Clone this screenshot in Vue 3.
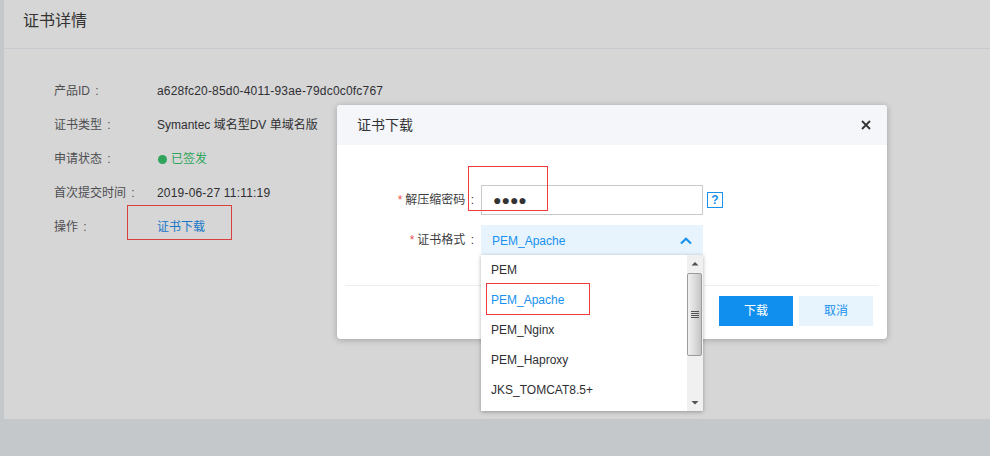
<script setup>
const rows = [
  { label: '产品ID :', value: 'a628fc20-85d0-4011-93ae-79dc0c0fc767', kind: 'wide' },
  { label: '证书类型 :', value: 'Symantec 域名型DV 单域名版' },
  { label: '申请状态 :', value: '已签发', kind: 'status' },
  { label: '首次提交时间 :', value: '2019-06-27 11:11:19', kind: 'wide' },
  { label: '操作 :', value: '证书下载', kind: 'link' },
]
const options = ['PEM', 'PEM_Apache', 'PEM_Nginx', 'PEM_Haproxy', 'JKS_TOMCAT8.5+']
</script>

<template>
  <div class="page">
    <main class="panel">
      <h1 class="title">证书详情</h1>
      <dl class="info">
        <div v-for="r in rows" :key="r.label" class="row">
          <dt>{{ r.label }}</dt>
          <dd :class="r.kind">
            <i v-if="r.kind === 'status'" class="dot"></i>{{ r.value }}
            <span v-if="r.kind === 'link'" class="mark mark-link"></span>
          </dd>
        </div>
      </dl>
    </main>

    <section class="modal">
      <header class="modal-head">
        <span>证书下载</span>
        <svg class="close" width="10" height="10" viewBox="0 0 10 10"><path d="M1 1l8 8M9 1l-8 8" stroke="#333" stroke-width="1.800" fill="none"/></svg>
      </header>
      <div class="modal-body">
        <div class="field">
          <label><b>*</b>解压缩密码 :</label>
          <div class="input">●●●●</div>
          <span class="help">?</span>
        </div>
        <div class="field field-select">
          <label><b>*</b>证书格式 :</label>
          <div class="select">
            <span>PEM_Apache</span>
            <svg width="12" height="8" viewBox="0 0 12 8"><path d="M1 6.500L6 1.800l5 4.700" stroke="#1890ee" stroke-width="2.200" fill="none"/></svg>
          </div>
        </div>
      </div>
      <footer class="modal-foot">
        <button class="btn primary">下载</button>
        <button class="btn plain">取消</button>
      </footer>
    </section>

    <div class="dropdown">
      <ul>
        <li v-for="o in options" :key="o" :class="{ active: o === 'PEM_Apache' }">{{ o }}</li>
      </ul>
      <div class="scrollbar">
        <svg class="arrow" width="16" height="17" viewBox="0 0 16 17"><path d="M4.500 10.500h7L8 7z" fill="#505050"/></svg>
        <div class="thumb"><i></i><i></i><i></i><i></i></div>
        <svg class="arrow down" width="16" height="17" viewBox="0 0 16 17"><path d="M4.500 7h7L8 10.500z" fill="#505050"/></svg>
      </div>
    </div>

    <span class="mark mark-pass"></span>
    <span class="mark mark-option"></span>
  </div>
</template>

<style scoped>
.page {
  position: relative;
  width: 990px;
  height: 456px;
  padding-left: 4px;
  box-sizing: border-box;
  overflow: hidden;
  background: #c4c8cb;
  font: 12px/1 "Liberation Sans", "Noto Sans CJK SC", sans-serif;
  color: #2f2f33;
}
.panel {
  height: 419px;
  background: #d6d6d6;
}
.title {
  margin: 0;
  height: 49px;
  box-sizing: border-box;
  padding: 12px 0 0 19px;
  border-bottom: 1px solid #c9cad0;
  font-size: 16px;
  line-height: 18px;
  font-weight: 400;
  color: #333;
}
.info {
  margin: 0;
  padding: 25px 0 0 50px;
}
.row {
  display: flex;
  height: 34px;
  line-height: 34px;
}
dt {
  width: 103px;
  color: #4e4e52;
  word-spacing: 2px;
}
dd {
  position: relative;
  margin: 0;
  display: flex;
  align-items: center;
}
.wide { letter-spacing: 0.19px; }
.status { color: #2ea55a; }
.link { color: #1877c9; }
.dot {
  width: 9px;
  height: 9px;
  margin: 0 4px 0 1px;
  border-radius: 50%;
  background: #2ea55a;
}
.mark {
  position: absolute;
  box-sizing: border-box;
  border: 1px solid #ee3c3c;
  pointer-events: none;
}
.mark-link {
  left: -30px;
  top: -5px;
  width: 105px;
  height: 35px;
  border-color: #d84040;
}
.mark-pass {
  left: 468px;
  top: 166px;
  width: 80px;
  height: 45px;
}
.mark-option {
  left: 486px;
  top: 283px;
  width: 104px;
  height: 32px;
}
.modal {
  position: absolute;
  left: 337px;
  top: 105px;
  width: 550px;
  height: 234px;
  display: flex;
  flex-direction: column;
  border-radius: 4px;
  background: #fff;
  box-shadow: 0 1px 6px rgba(0, 0, 0, .25);
  overflow: hidden;
}
.modal-head {
  height: 40px;
  flex: none;
  display: flex;
  align-items: center;
  justify-content: space-between;
  padding: 0 16px 0 20px;
  background: #f4f6fa;
  font-size: 14px;
  color: #333;
}
.modal-body {
  flex: 1;
  padding-top: 40px;
}
.field {
  display: flex;
  align-items: center;
  height: 30px;
}
.field-select { margin-top: 10px; }
label {
  width: 144px;
  flex: none;
  box-sizing: border-box;
  padding-right: 7px;
  text-align: right;
  word-spacing: 2px;
  color: #3c3c40;
}
label b {
  margin-right: 3px;
  font-weight: 400;
  color: #ef4f4f;
}
.input {
  width: 222px;
  height: 30px;
  box-sizing: border-box;
  padding-left: 11px;
  border: 1px solid #c9c9c9;
  line-height: 28px;
  font-size: 14px;
  color: #333;
}
.help {
  width: 16px;
  height: 16px;
  margin-left: 4px;
  box-sizing: border-box;
  border: 1px solid #1890ee;
  text-align: center;
  line-height: 14px;
  font-weight: 700;
  color: #1890ee;
}
.select {
  width: 222px;
  height: 30px;
  box-sizing: border-box;
  padding: 1px 11px 0;
  display: flex;
  align-items: center;
  justify-content: space-between;
  background: #e7f4fd;
  color: #1890ee;
}
.modal-foot {
  height: 54px;
  flex: none;
  margin: 0 8px;
  padding: 10px 6px 0 0;
  box-sizing: border-box;
  display: flex;
  justify-content: flex-end;
  gap: 6px;
  border-top: 1px solid #eeeeee;
}
.btn {
  width: 74px;
  height: 30px;
  border: 0;
  padding: 0;
  font: inherit;
}
.primary { background: #118fee; color: #fff; }
.plain { background: #e7f4fd; color: #1890ee; }
.dropdown {
  position: absolute;
  left: 481px;
  top: 255px;
  width: 222px;
  height: 156px;
  display: flex;
  background: #fff;
  box-shadow: 0 1px 4px rgba(0, 0, 0, .3);
}
ul {
  flex: 1;
  margin: 0;
  padding: 0;
  list-style: none;
}
li {
  height: 30px;
  padding-left: 10px;
  line-height: 30px;
}
.active { color: #1890ee; }
.scrollbar {
  width: 16px;
  flex: none;
  display: flex;
  flex-direction: column;
  background: #f0f0f0;
}
.arrow { flex: none; }
.thumb {
  height: 83px;
  width: 15px;
  margin: 1px 0 0;
  box-sizing: border-box;
  border: 1px solid #9c9c9c;
  border-radius: 2px;
  display: flex;
  flex-direction: column;
  align-items: center;
  justify-content: center;
  gap: 1px;
  background: linear-gradient(90deg, #f0f0f0, #d8d8d8 60%, #c4c4c4);
}
.thumb i {
  width: 8px;
  height: 1px;
  background: #555;
}
.down { margin-top: auto; }
</style>
